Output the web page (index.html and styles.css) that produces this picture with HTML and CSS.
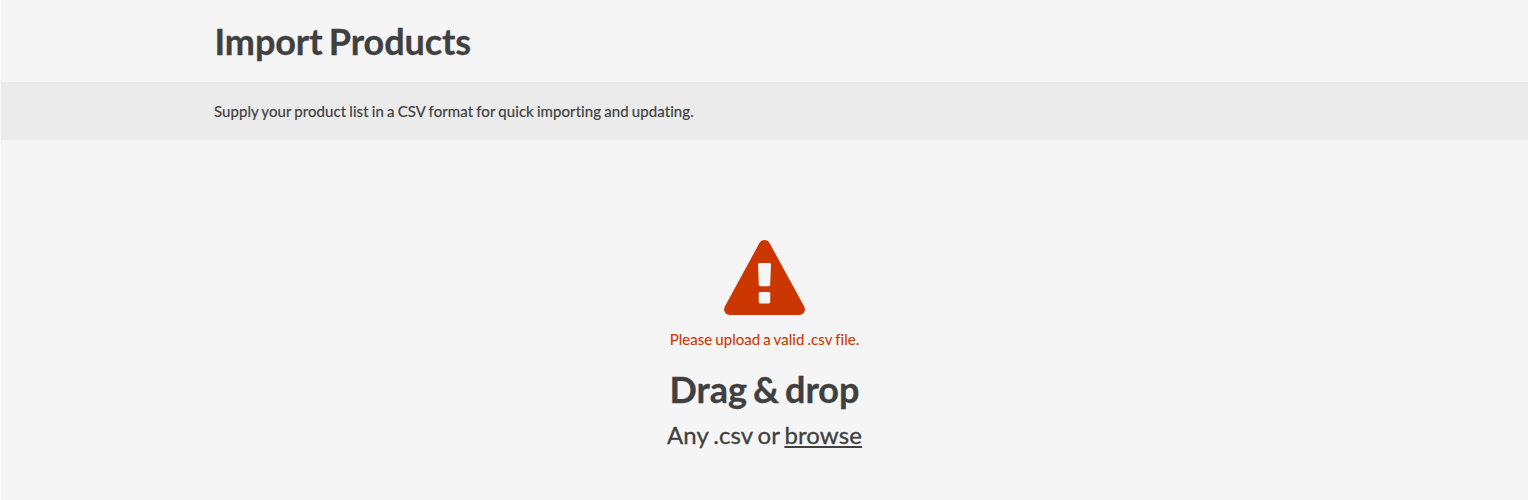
FILE: index.html
```html
<!DOCTYPE html>
<html lang="en">
<head>
<meta charset="utf-8">
<title>Import Products</title>
<link rel="stylesheet" href="styles.css">
</head>
<body>
<header class="page-header"><h1 class="page-title">Import Products</h1></header>
<div class="intro"><p class="intro-text">Supply your product list in a CSV format for quick importing and updating.</p></div>
<main class="dropzone">
<svg class="warning-icon" viewBox="0 0 1792 1664" aria-hidden="true"><path fill="currentColor" d="M1024 1375v-190q0-14-9.500-23.500t-22.500-9.500h-192q-13 0-22.500 9.500t-9.500 23.500v190q0 14 9.500 23.500t22.500 9.500h192q13 0 22.500-9.500t9.500-23.500zM1022 1001l18-459q0-12-10-19-13-11-24-11h-220q-11 0-24 11-10 7-10 21l17 457q0 10 10 16.500t24 6.500h185q14 0 23.500-6.500t10.500-16.500zM1008 67l768 1408q35 63-2 126-17 29-46.500 46t-63.500 17h-1536q-34 0-63.500-17t-46.500-46q-37-63-2-126l768-1408q17-31 47-49t65-18 65 18 47 49z"/></svg>
<p class="error-text">Please upload a valid .csv file.</p>
<h2 class="drop-title">Drag &amp; drop</h2>
<p class="drop-hint">Any .csv or <a class="browse" href="#">browse</a></p>
</main>
</body>
</html>
```
FILE: styles.css
```css
* { box-sizing: border-box; }
body { margin: 0; height: 500px; background: #f5f5f5; color: #404041; font-family: Lato, sans-serif; border-left: 1px solid #f9f9f9; font-variant-ligatures: none; }
h1, h2, p { margin: 0; }
.page-header { height: 82px; padding: 19px 213px 0 213.5px; }
.page-title { font-size: 36px; line-height: 44px; font-weight: 700; word-spacing: -2.4px; letter-spacing: -0.08px; -webkit-text-stroke: 0.3px; }
.intro { height: 58px; padding: 20px 213px 0; background: #ebebeb; }
.intro-text { font-size: 15px; line-height: 18px; word-spacing: -0.8px; letter-spacing: 0.08px; -webkit-text-stroke: 0.2px; }
.dropzone { display: flex; flex-direction: column; align-items: center; padding-top: 100px; }
.warning-icon { width: 81px; height: 75px; color: #cc3600; }
.error-text { margin-top: 15px; font-size: 15px; line-height: 18px; color: #cc3600; word-spacing: -0.8px; letter-spacing: 0.05px; -webkit-text-stroke: 0.1px; }
.drop-title { margin-top: 19px; font-size: 36px; line-height: 44px; font-weight: 700; word-spacing: -2.8px; -webkit-text-stroke: 0.3px; }
.drop-hint { margin-top: 9px; font-size: 24px; line-height: 30px; word-spacing: -1.5px; letter-spacing: 0.12px; -webkit-text-stroke: 0.3px; }
.browse { color: inherit; text-decoration-thickness: 2px; text-underline-offset: 2px; text-decoration-skip-ink: none; }
```
